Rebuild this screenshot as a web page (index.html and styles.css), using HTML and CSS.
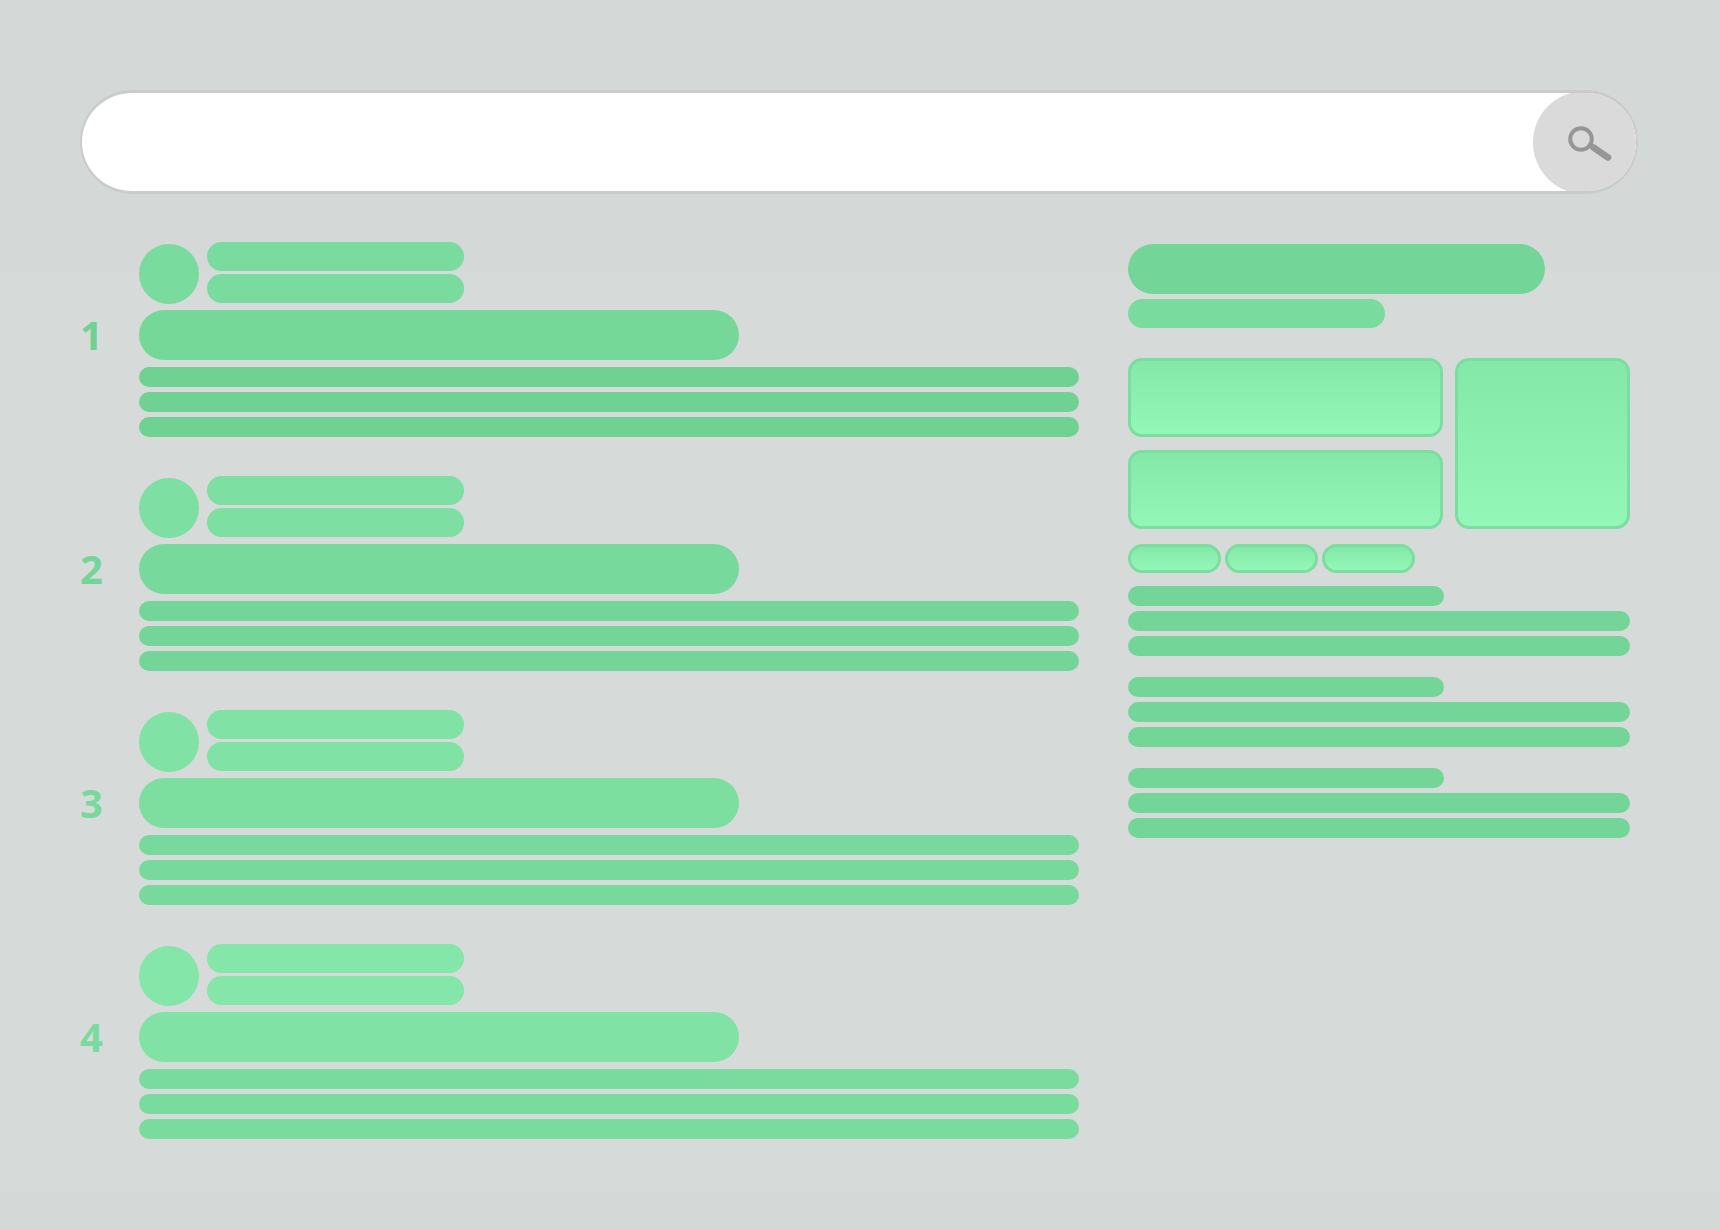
FILE: index.html
```html
<!DOCTYPE html>
<html lang="en">
<head>
    <meta charset="UTF-8">
    <meta name="viewport" content="width=device-width, initial-scale=1.0">
    <title>Search results</title>
    <link rel="stylesheet" href="styles.css">
</head>

<body>
    <form class="search" role="search">
        <input type="search" class="search-input" name="q" aria-label="Search">
        <button type="submit" class="search-button" aria-label="Search">
            <svg width="54" height="44" viewBox="0 0 54 44" fill="none" stroke="#969696">
                <path d="M31 24L37 28" stroke-width="4.500"/>
                <circle cx="23" cy="19" r="10.800" stroke-width="4"/>
                <path d="M35.500 27.500L50 37.500" stroke-width="6.600" stroke-linecap="round"/>
            </svg>
        </button>
    </form>

    <div class="content">
        <main class="results">
            <article class="result result-1">
                <div class="result-head">
                    <div class="avatar"></div>
                    <div class="meta">
                        <div class="bar bar-sub"></div>
                        <div class="bar bar-sub"></div>
                    </div>
                </div>
                <span class="number">1</span>
                <div class="bar bar-title"></div>
                <div class="lines">
                    <div class="bar line"></div>
                    <div class="bar line"></div>
                    <div class="bar line"></div>
                </div>
            </article>

            <article class="result result-2">
                <div class="result-head">
                    <div class="avatar"></div>
                    <div class="meta">
                        <div class="bar bar-sub"></div>
                        <div class="bar bar-sub"></div>
                    </div>
                </div>
                <span class="number">2</span>
                <div class="bar bar-title"></div>
                <div class="lines">
                    <div class="bar line"></div>
                    <div class="bar line"></div>
                    <div class="bar line"></div>
                </div>
            </article>

            <article class="result result-3">
                <div class="result-head">
                    <div class="avatar"></div>
                    <div class="meta">
                        <div class="bar bar-sub"></div>
                        <div class="bar bar-sub"></div>
                    </div>
                </div>
                <span class="number">3</span>
                <div class="bar bar-title"></div>
                <div class="lines">
                    <div class="bar line"></div>
                    <div class="bar line"></div>
                    <div class="bar line"></div>
                </div>
            </article>

            <article class="result result-4">
                <div class="result-head">
                    <div class="avatar"></div>
                    <div class="meta">
                        <div class="bar bar-sub"></div>
                        <div class="bar bar-sub"></div>
                    </div>
                </div>
                <span class="number">4</span>
                <div class="bar bar-title"></div>
                <div class="lines">
                    <div class="bar line"></div>
                    <div class="bar line"></div>
                    <div class="bar line"></div>
                </div>
            </article>
        </main>

        <aside class="panel">
            <div class="panel-head">
                <div class="bar panel-title"></div>
                <div class="bar bar-sub"></div>
            </div>

            <div class="gallery">
                <div class="box"></div>
                <div class="box box-tall"></div>
                <div class="box"></div>
            </div>

            <div class="pills">
                <div class="pill"></div>
                <div class="pill"></div>
                <div class="pill"></div>
            </div>

            <div class="facts">
                <div class="lines">
                    <div class="bar line line-short"></div>
                    <div class="bar line"></div>
                    <div class="bar line"></div>
                </div>
                <div class="lines">
                    <div class="bar line line-short"></div>
                    <div class="bar line"></div>
                    <div class="bar line"></div>
                </div>
                <div class="lines">
                    <div class="bar line line-short"></div>
                    <div class="bar line"></div>
                    <div class="bar line"></div>
                </div>
            </div>
        </aside>
    </div>
</body>
</html>
```
FILE: styles.css
```css
* {
    box-sizing: border-box;
}

body {
    font-family: 'Open Sans', sans-serif;
    background: linear-gradient(#d4d8d7 22%, #d6dad9 22%, #d6dad9 97%, #d4d8d7 97%);
    margin: 0;
    padding: 90px 82px 80px 80px;
    min-height: 100vh;
}

/* search bar */
.search {
    display: flex;
    align-items: center;
    height: 104px;
    background: #ffffff;
    border: 2px solid #cacccb;
    border-width: 3px 2px;
    border-radius: 52px;
    overflow: hidden;
}

.search-input {
    flex: 1;
    min-width: 0;
    height: 100%;
    padding: 0 48px;
    border: none;
    outline: none;
    background: transparent;
    font-family: inherit;
    font-size: 32px;
}

.search-button {
    display: flex;
    flex-shrink: 0;
    justify-content: center;
    align-items: center;
    width: 103px;
    height: 103px;
    padding: 0;
    border: none;
    border-radius: 50%;
    background: #dadada;
    cursor: pointer;
}

/* columns */
.content {
    display: grid;
    grid-template-columns: 999fr 502fr;
    gap: 49px;
    padding: 48px 8px 0 0;
}

.bar {
    background: var(--line);
}

.bar-sub {
    width: 257px;
    max-width: 100%;
    height: 29px;
    border-radius: 15px;
    background: var(--sub);
}

.lines {
    display: grid;
    gap: 5px;
}

.line {
    height: 20px;
    border-radius: 10px;
}

.line-short {
    width: 63%;
}

/* results */
.results {
    display: grid;
    gap: 39px;
}

.result {
    display: grid;
    grid-template-columns: 59px 1fr;
    align-items: center;
}

.result-1 {
    --sub: #79dc9e;
    --title: #75d899;
    --line: #6fd293;
}

.result-2 {
    --sub: #7ddfa1;
    --title: #77da9c;
    --line: #73d698;
}

.result-3 {
    --sub: #80e2a4;
    --title: #7cde9f;
    --line: #77d99c;
}

.result-4 {
    --sub: #84e6a8;
    --title: #80e2a4;
    --line: #79dc9e;
}

.result-head {
    display: flex;
    align-items: flex-end;
    gap: 8px;
    grid-column: 2;
    margin-bottom: 6px;
}

.avatar {
    width: 60px;
    height: 60px;
    border-radius: 50%;
    background: var(--sub);
}

.meta {
    display: grid;
    gap: 3px;
    padding-bottom: 1px;
}

.number {
    color: var(--line);
    font-size: 40px;
    font-weight: 700;
    line-height: 46px;
}

.bar-title {
    width: 600px;
    max-width: 100%;
    height: 50px;
    border-radius: 25px;
    background: var(--title);
}

.result .lines {
    grid-column: 2;
    margin-top: 7px;
}

/* side panel */
.panel {
    --sub: #79dc9e;
    --line: #73d698;
    padding-top: 2px;
}

.panel-head {
    display: grid;
    gap: 5px;
}

.panel-title {
    width: 83%;
    height: 50px;
    border-radius: 25px;
}

.gallery {
    display: grid;
    grid-template-columns: 315fr 175fr;
    grid-template-rows: 79px 79px;
    gap: 13px 12px;
    margin-top: 30px;
}

.box,
.pill {
    border: 3px solid #7bdda0;
    background: linear-gradient(#84e8a8, #93f8b7);
}

.box {
    border-radius: 14px;
}

.box-tall {
    grid-row: 1 / 3;
    grid-column: 2;
}

.pills {
    display: flex;
    gap: 4px;
    margin-top: 15px;
}

.pill {
    width: 93px;
    height: 29px;
    border-radius: 15px;
}

.facts {
    display: grid;
    gap: 21px;
    margin-top: 13px;
}
```
